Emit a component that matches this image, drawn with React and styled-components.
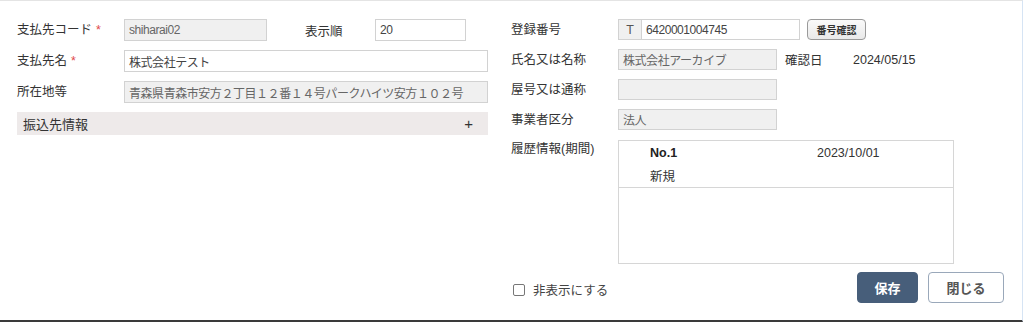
import styled, { createGlobalStyle } from 'styled-components'

const GlobalStyle = createGlobalStyle`
    body {
        margin: 0;
        background: #fff;
        font-family: "Liberation Sans", "Noto Sans CJK JP", sans-serif;
        font-size: 12.5px;
        color: #333;
    }
`

function App() {
    return (
        <>
            <GlobalStyle />
            <Panel>
                <LeftCol>
                    <Row>
                        <Label>支払先コード<Req>*</Req></Label>
                        <Input $w={143} $disabled>shiharai02</Input>
                        <SubLabel>表示順</SubLabel>
                        <Input $w={91}>20</Input>
                    </Row>
                    <Row>
                        <Label>支払先名<Req>*</Req></Label>
                        <Input $w={364}>株式会社テスト</Input>
                    </Row>
                    <Row>
                        <Label>所在地等</Label>
                        <Input $w={364} $disabled>青森県青森市安方２丁目１２番１４号パークハイツ安方１０２号</Input>
                    </Row>
                    <Accordion>
                        <span>振込先情報</span>
                        <Plus>+</Plus>
                    </Accordion>
                </LeftCol>

                <RightCol>
                    <RRow>
                        <Label>登録番号</Label>
                        <Prefix>T</Prefix>
                        <Input $w={158} $h={21} $noLeft>6420001004745</Input>
                        <SmallButton>番号確認</SmallButton>
                    </RRow>
                    <RRow>
                        <Label>氏名又は名称</Label>
                        <Input $w={159} $h={21} $disabled>株式会社アーカイブ</Input>
                        <DateLabel>確認日</DateLabel>
                        <span>2024/05/15</span>
                    </RRow>
                    <RRow>
                        <Label>屋号又は通称</Label>
                        <Input $w={159} $h={21} $disabled />
                    </RRow>
                    <RRow>
                        <Label>事業者区分</Label>
                        <Input $w={159} $h={21} $disabled>法人</Input>
                    </RRow>
                    <HistoryRow>
                        <Label>履歴情報(期間)</Label>
                        <HistoryBox>
                            <HistoryItem>
                                <HistoryLine>
                                    <No>No.1</No>
                                    <span>2023/10/01</span>
                                </HistoryLine>
                                <HistoryLine>新規</HistoryLine>
                            </HistoryItem>
                        </HistoryBox>
                    </HistoryRow>
                    <Footer>
                        <Check>
                            <Box />
                            非表示にする
                        </Check>
                        <Buttons>
                            <Button $primary>保存</Button>
                            <Button>閉じる</Button>
                        </Buttons>
                    </Footer>
                </RightCol>
            </Panel>
        </>
    )
}

export default App

const Panel = styled.div`
    width: 1022px;
    height: 319px;
    border-top: 1px solid #e4e4e4;
    border-right: 1px solid #d6e4f4;
    border-bottom: 2px solid #3a3a3a;
    display: flex;
    box-sizing: content-box;
`

const LeftCol = styled.div`
    width: 471px;
    margin-left: 17px;
    padding-top: 18px;
    display: flex;
    flex-direction: column;
    gap: 9px;
`

const RightCol = styled.div`
    width: 493px;
    margin-left: 23px;
    padding-top: 18px;
    display: flex;
    flex-direction: column;
    gap: 9px;
`

const Row = styled.div`
    display: flex;
    align-items: center;
    height: 22px;
`

const RRow = styled(Row)`
    height: 21px;
`

const Label = styled.div`
    width: 107px;
    flex-shrink: 0;
    line-height: 18px;
`

const Req = styled.span`
    color: #e04848;
    margin-left: 4px;
`

const SubLabel = styled.div`
    margin-left: 38px;
    width: 70px;
`

const DateLabel = styled.div`
    margin-left: 8px;
    width: 68px;
`

const Input = styled.div`
    box-sizing: border-box;
    width: ${p => p.$w}px;
    height: ${p => p.$h || 22}px;
    border: 1px solid #d2d2d2;
    ${p => p.$noLeft && 'border-left: none;'}
    background: ${p => (p.$disabled ? '#f0f0f0' : '#fff')};
    color: ${p => (p.$disabled ? '#666' : '#444')};
    font-size: 12px;
    letter-spacing: -0.45px;
    padding: 0 4px;
    display: flex;
    align-items: center;
    white-space: nowrap;
    overflow: hidden;
`

const Prefix = styled.div`
    box-sizing: border-box;
    width: 24px;
    height: 21px;
    border: 1px solid #d2d2d2;
    background: #f0f0f0;
    color: #555;
    display: flex;
    align-items: center;
    justify-content: center;
`

const SmallButton = styled.button`
    margin-left: 7px;
    width: 59px;
    height: 21px;
    border: 1px solid #9a9a9a;
    border-radius: 4px;
    background: linear-gradient(#fafafa, #e9e9e9);
    font-family: inherit;
    font-size: 10px;
    font-weight: bold;
    color: #333;
    padding: 0;
`

const Accordion = styled.div`
    height: 23px;
    background: #eeeaea;
    display: flex;
    align-items: center;
    justify-content: space-between;
    padding: 0 15px 0 6px;
    font-size: 13px;
    color: #333;
`

const Plus = styled.span`
    font-size: 15px;
`

const HistoryRow = styled.div`
    display: flex;
    align-items: flex-start;
    margin-top: 1px;
`

const HistoryBox = styled.div`
    box-sizing: border-box;
    width: 336px;
    height: 124px;
    border: 1px solid #d6d6d6;
`

const HistoryItem = styled.div`
    height: 47px;
    border-bottom: 1px solid #d6d6d6;
    padding: 1px 0 0 31px;
    box-sizing: border-box;
`

const HistoryLine = styled.div`
    display: flex;
    height: 22px;
    align-items: center;
`

const No = styled.span`
    font-weight: bold;
    width: 167px;
    color: #222;
`

const Footer = styled.div`
    display: flex;
    align-items: center;
    justify-content: space-between;
    height: 31px;
    margin-top: -1px;
`

const Check = styled.label`
    display: flex;
    align-items: center;
    gap: 8px;
    margin: 4px 0 0 2px;
    color: #444;
`

const Box = styled.span`
    width: 10px;
    height: 10px;
    border: 1px solid #777;
    border-radius: 2px;
`

const Buttons = styled.div`
    display: flex;
    gap: 10px;
`

const Button = styled.button`
    box-sizing: border-box;
    width: ${p => (p.$primary ? 61 : 76)}px;
    height: 31px;
    border-radius: 4px;
    border: 1px solid ${p => (p.$primary ? '#475e7a' : '#9aa8ba')};
    background: ${p => (p.$primary ? '#475e7a' : '#fff')};
    color: ${p => (p.$primary ? '#fff' : '#555')};
    font-family: inherit;
    font-size: 13px;
    font-weight: bold;
`
